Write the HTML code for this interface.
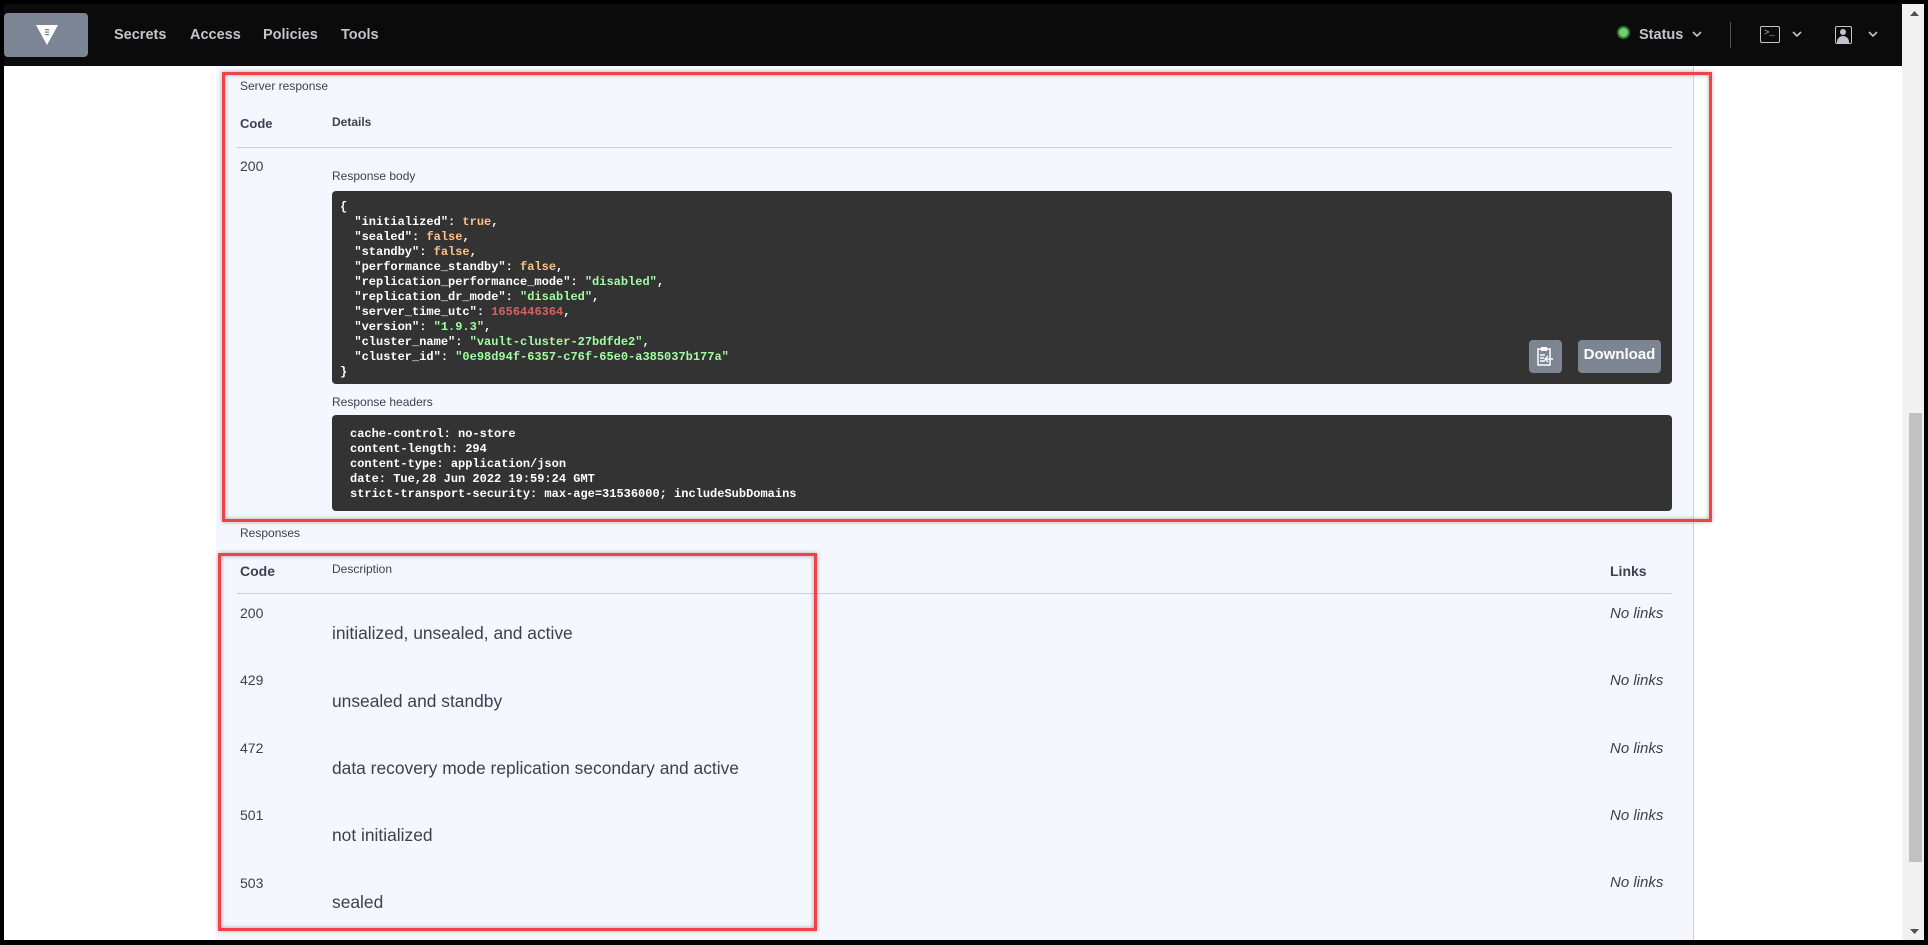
<!DOCTYPE html>
<html><head><meta charset="utf-8"><style>
*{margin:0;padding:0;box-sizing:border-box}
body{width:1928px;height:945px;background:#000;position:relative;overflow:hidden;font-family:"Liberation Sans",Arial,sans-serif;color:#3b4151}
.a{position:absolute;white-space:pre}
#page{position:absolute;left:4px;top:4px;width:1898px;height:936px;background:#fff}
#nav{position:absolute;left:4px;top:4px;width:1898px;height:62px;background:#0b0b0b}
.nl{color:#c2c5cb;font-size:14.5px;font-weight:bold;top:27px}
#panel{position:absolute;left:216px;top:66px;width:1478px;height:874px;background:#f4f7fe;border-right:1px solid #c3d3f3}
.red{position:absolute;border:3.5px solid #f04247;box-shadow:inset 0 0 4px rgba(0,0,0,.35),0 0 4px rgba(0,0,0,.3)}
.code{position:absolute;background:#333;border-radius:4px;font-family:"Liberation Mono",monospace;font-size:12px;font-weight:bold;color:#fff;line-height:15px;white-space:pre}
.o{color:#fcc28c}.g{color:#a2fca2}.r{color:#d36363}
.sm{font-size:12px;color:#3b4151}
.hd{font-size:13px;font-weight:bold}
.c{font-size:14px}
.d{font-size:17.4px}
.nl2{font-size:15px;font-style:italic;color:#3b4151}
.ln{position:absolute;left:237px;width:1435px;height:1px;background:#ccd0de}
</style></head><body>
<div id="page"></div>
<div id="nav"></div>
<div class="a" style="left:4px;top:13px;width:84px;height:44px;background:#7c8594;border-radius:4px"></div>
<svg class="a" style="left:36px;top:24px" width="22" height="22" viewBox="0 0 22 22"><path d="M0 1H22L11 21Z" fill="#fff"/><rect x="9" y="5" width="4" height="1.3" fill="#7c8594"/><rect x="9" y="7.5" width="4" height="1.3" fill="#7c8594"/><rect x="9" y="10" width="4" height="1.3" fill="#7c8594"/></svg>
<div class="a nl" style="left:114px">Secrets</div>
<div class="a nl" style="left:190px">Access</div>
<div class="a nl" style="left:263px">Policies</div>
<div class="a nl" style="left:341px">Tools</div>
<div class="a" style="left:1617px;top:26px;width:13px;height:13px;border-radius:50%;background:#6fcf6f;border:2px solid #2d7a2d"></div>
<div class="a nl" style="left:1639px">Status</div>
<svg class="a" style="left:1692px;top:31px" width="10" height="7"><path d="M1 1L5 5L9 1" stroke="#c2c5cb" stroke-width="1.6" fill="none"/></svg>
<div class="a" style="left:1730px;top:22px;width:1px;height:26px;background:#555"></div>
<div class="a" style="left:1760px;top:26px;width:20px;height:17px;border:1.5px solid #c2c5cb;border-radius:2px"></div>
<div class="a" style="left:1764px;top:28px;color:#c2c5cb;font-size:9px;font-family:'Liberation Mono',monospace">&gt;_</div>
<svg class="a" style="left:1792px;top:31px" width="10" height="7"><path d="M1 1L5 5L9 1" stroke="#c2c5cb" stroke-width="1.6" fill="none"/></svg>
<div class="a" style="left:1835px;top:26px;width:17px;height:18px;border:1.5px solid #c2c5cb;border-radius:2px;overflow:hidden"><div style="position:absolute;left:4px;top:2px;width:6px;height:6px;border-radius:50%;background:#c2c5cb"></div><div style="position:absolute;left:1px;top:9px;width:12px;height:8px;border-radius:6px 6px 0 0;background:#c2c5cb"></div></div>
<svg class="a" style="left:1868px;top:31px" width="10" height="7"><path d="M1 1L5 5L9 1" stroke="#c2c5cb" stroke-width="1.6" fill="none"/></svg>
<div class="a" style="left:1902px;top:4px;width:22px;height:936px;background:#f1f1f1"></div>
<div class="a" style="left:1909px;top:413px;width:13px;height:449px;background:#c1c1c1"></div>
<svg class="a" style="left:1910px;top:11px" width="9" height="5"><path d="M0 5L4.5 0L9 5Z" fill="#505050"/></svg>
<svg class="a" style="left:1910px;top:929px" width="9" height="5"><path d="M0 0L4.5 5L9 0Z" fill="#505050"/></svg>

<div id="panel"></div>
<div class="a sm" style="left:240px;top:79px">Server response</div>
<div class="a hd" style="left:240px;top:116px">Code</div>
<div class="a sm" style="left:332px;top:115px;font-weight:bold">Details</div>
<div class="ln" style="top:147px"></div>
<div class="a c" style="left:240px;top:158px">200</div>
<div class="a sm" style="left:332px;top:169px">Response body</div>
<div class="code" style="left:332px;top:191px;width:1340px;height:193px;padding:9px 0 0 8px">{
  "initialized": <span class="o">true</span>,
  "sealed": <span class="o">false</span>,
  "standby": <span class="o">false</span>,
  "performance_standby": <span class="o">false</span>,
  "replication_performance_mode": <span class="g">"disabled"</span>,
  "replication_dr_mode": <span class="g">"disabled"</span>,
  "server_time_utc": <span class="r">1656446364</span>,
  "version": <span class="g">"1.9.3"</span>,
  "cluster_name": <span class="g">"vault-cluster-27bdfde2"</span>,
  "cluster_id": <span class="g">"0e98d94f-6357-c76f-65e0-a385037b177a"</span>
}</div>
<div class="a" style="left:1529px;top:340px;width:33px;height:33px;background:#7d8492;border-radius:4px"></div>
<svg class="a" style="left:1536px;top:346px" width="19" height="21" viewBox="0 0 19 21"><rect x="2" y="3" width="12" height="16" fill="none" stroke="#fff" stroke-width="1.5"/><rect x="5" y="1" width="6" height="4" fill="#fff"/><path d="M4 9h5M4 12h4M4 15h5M17 13h-7M12 10l-3 3 3 3" stroke="#fff" stroke-width="1.4" fill="none"/></svg>
<div class="a" style="left:1578px;top:340px;width:83px;height:33px;background:#7d8492;border-radius:4px;color:#fff;font-weight:bold;font-size:15px;text-align:center;line-height:30px">Download</div>
<div class="a sm" style="left:332px;top:395px">Response headers</div>
<div class="code" style="left:332px;top:415px;width:1340px;height:96px;padding:12px 0 0 18px">cache-control: no-store
content-length: 294
content-type: application/json
date: Tue,28 Jun 2022 19:59:24 GMT
strict-transport-security: max-age=31536000; includeSubDomains</div>
<div class="red" style="left:222px;top:72px;width:1490px;height:450px"></div>

<div class="a sm" style="left:240px;top:526px">Responses</div>
<div class="a hd" style="left:240px;top:563px;font-size:14px">Code</div>
<div class="a sm" style="left:332px;top:562px">Description</div>
<div class="a hd" style="left:1610px;top:563px;font-size:14px">Links</div>
<div class="ln" style="top:593px"></div>
<div class="a c" style="left:240px;top:605px">200</div><div class="a d" style="left:332px;top:623px">initialized, unsealed, and active</div><div class="a nl2" style="left:1610px;top:605px">No links</div>
<div class="a c" style="left:240px;top:672px">429</div><div class="a d" style="left:332px;top:691px">unsealed and standby</div><div class="a nl2" style="left:1610px;top:672px">No links</div>
<div class="a c" style="left:240px;top:740px">472</div><div class="a d" style="left:332px;top:758px">data recovery mode replication secondary and active</div><div class="a nl2" style="left:1610px;top:740px">No links</div>
<div class="a c" style="left:240px;top:807px">501</div><div class="a d" style="left:332px;top:825px">not initialized</div><div class="a nl2" style="left:1610px;top:807px">No links</div>
<div class="a c" style="left:240px;top:875px">503</div><div class="a d" style="left:332px;top:892px">sealed</div><div class="a nl2" style="left:1610px;top:874px">No links</div>
<div class="red" style="left:218px;top:553px;width:599px;height:378px"></div>
</body></html>
